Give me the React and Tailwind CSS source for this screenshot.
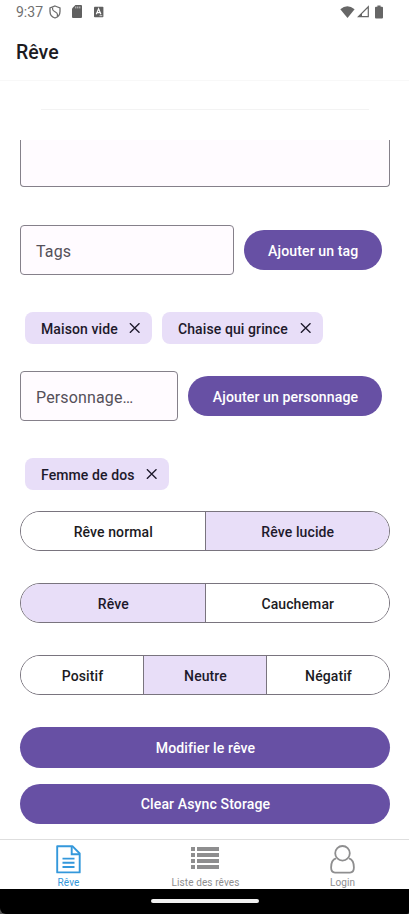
const purple =
  "flex items-center justify-center rounded-full bg-[#6750a4] text-[14.1px] font-medium tracking-[0.1px] text-white whitespace-nowrap";

function StatusBar() {
  return (
    <div className="flex h-6 items-center justify-between pl-4 pr-[26px] text-[#666]">
      <div className="flex items-center">
        <span className="w-[27px] text-[14px] leading-6 text-[#707070]">9:37</span>
        <svg className="ml-[6px]" width="12" height="14" viewBox="0 0 12 14" fill="none" stroke="#6c6c6c" strokeWidth="1.3">
          <path d="M6 1 L11 2.9 V6.5 C11 9.4 9 12 6 13 C3 12 1 9.4 1 6.5 V2.9 Z" />
          <path d="M3.6 2.4 V4.2 C3.6 6.6 8.4 6.8 8.4 9.2 V11" strokeWidth="1.2" />
        </svg>
        <svg className="-mt-px ml-[11px]" width="10" height="13" viewBox="0 0 10 13">
          <path d="M3.4 0 H9 Q10 0 10 1 V12 Q10 13 9 13 H1 Q0 13 0 12 V3.6 Z" fill="#606060" />
          <path d="M3.8 1.5V3.4M5.8 1.5V3.4M7.8 1.5V3.4" stroke="#ddd" strokeWidth="0.9" />
        </svg>
        <svg className="ml-[12px]" width="10" height="12" viewBox="0 0 10 12">
          <rect y="0.8" width="9.4" height="10.4" rx="0.8" fill="#606060" />
          <path d="M2.3 8.2 L4.6 2.8 L6.9 8.2 M3.1 6.6 H6.1" stroke="#fff" strokeWidth="1.2" fill="none" />
          <path d="M5.5 9.7H8.3" stroke="#ddd" strokeWidth="0.9" />
        </svg>
      </div>
      <div className="-mt-px flex items-center">
        <svg width="15" height="12" viewBox="0 0 15 12">
          <path d="M0.3 3.3 Q7.3 -3 14.6 3.3 L7.5 12 Z" fill="#666" />
        </svg>
        <svg className="ml-[2px]" width="13" height="13" viewBox="0 0 13 13">
          <path d="M11.3 1.8 V11.6 H1.5 Z" fill="none" stroke="#666" strokeWidth="1.2" />
          <path d="M5 8 V12 H1 Z" fill="#666" />
        </svg>
        <svg className="ml-[5px]" width="8" height="14" viewBox="0 0 8 14">
          <path d="M2.4 0.6 H5.6 V1.8 H7 Q8 1.8 8 2.8 V12.4 Q8 13.4 7 13.4 H1 Q0 13.4 0 12.4 V2.8 Q0 1.8 1 1.8 H2.4 Z" fill="#666" />
        </svg>
      </div>
    </div>
  );
}

function Chip({ label, width }) {
  return (
    <div className={"flex h-8 items-center justify-between rounded-lg bg-[#e8def8] pl-4 pr-3 text-[14px] font-medium tracking-[0.1px] text-[#1d192b] whitespace-nowrap " + width}>
      <span className="pt-[2px]">{label}</span>
      <svg width="11" height="10" viewBox="0 0 11 10" fill="none" stroke="#1d192b" strokeWidth="1.3">
        <path d="M0.9 0.2 L10.5 9.8 M10.5 0.2 L0.9 9.8" />
      </svg>
    </div>
  );
}

function Field({ label, className }) {
  return (
    <div className={"flex h-[50px] items-center rounded-[4px] border border-[#85808a] bg-[#fffbff] pl-[15px] pt-[3px] text-[16px] tracking-[0.15px] text-[#555059] " + className}>
      {label}
    </div>
  );
}

function Segments({ items, active, className }) {
  return (
    <div className={"flex h-10 shrink-0 divide-x divide-[#79747e] overflow-hidden rounded-full border border-[#79747e] text-[14px] font-medium tracking-[0.1px] " + className}>
      {items.map((t, i) => (
        <div key={t} className={"flex flex-1 items-center justify-center pl-px pt-[2px] " + (i === active ? "bg-[#e8def8] text-[#1d192b]" : "bg-white text-[#1c1b1f]")}>
          {t}
        </div>
      ))}
    </div>
  );
}

function Tab({ label, color, children }) {
  return (
    <div className={"flex flex-1 flex-col items-center " + color}>
      <div className="flex h-[36px] items-start justify-center pt-[5px]">{children}</div>
      <span className="text-[10px] leading-[13px] tracking-[0.1px]">{label}</span>
    </div>
  );
}

export default function App() {
  return (
    <div className="flex h-[914px] w-[409px] flex-col overflow-hidden bg-white font-['Roboto',sans-serif]">
      <StatusBar />
      <header className="flex h-[57px] shrink-0 items-center border-b border-[#f8f8f8] pl-4 pt-[2px] text-[19.5px] font-medium text-[#1c1b1f]">
        Rêve
      </header>

      <main className="flex h-[758px] shrink-0 flex-col pl-5 pr-[19px]">
        <div className="mx-[21px] mt-7 h-px shrink-0 bg-[#f3f3f3]" />
        <div className="mt-[30px] h-[47px] shrink-0 rounded-b-[4px] border border-t-0 border-[#85808a] bg-[#fffbff]" />

        <div className="mt-[38px] flex shrink-0 items-center pr-2">
          <Field label="Tags" className="w-[214px]" />
          <button className={purple + " ml-[9.5px] h-10 flex-1 pl-px pt-[3px]"}>Ajouter un tag</button>
        </div>
        <div className="mt-[37px] flex shrink-0 gap-[10px] pl-[5px]">
          <Chip label="Maison vide" width="w-[127px]" />
          <Chip label="Chaise qui grince" width="w-[160.5px]" />
        </div>

        <div className="mt-[27px] flex shrink-0 items-center pr-2">
          <Field label="Personnage…" className="w-[158px]" />
          <button className={purple + " ml-[10px] h-10 flex-1 pl-px pt-[3px]"}>Ajouter un personnage</button>
        </div>
        <div className="mt-[37px] flex shrink-0 pl-[5px]">
          <Chip label="Femme de dos" width="w-[144px]" />
        </div>

        <Segments items={["Rêve normal", "Rêve lucide"]} active={1} className="mt-[21px]" />
        <Segments items={["Rêve", "Cauchemar"]} active={0} className="mt-8" />
        <Segments items={["Positif", "Neutre", "Négatif"]} active={1} className="mt-8" />

        <button className={purple + " mt-[32px] h-[41px] shrink-0 pl-px pt-[2px]"}>Modifier le rêve</button>
        <button className={purple + " mt-[15.5px] h-10 shrink-0 pl-px pt-[2px]"}>Clear Async Storage</button>
      </main>

      <nav className="flex h-[50px] w-[411px] shrink-0 overflow-hidden border-t border-[#dedede] bg-white">
        <Tab label="Rêve" color="text-[#3498db]">
          <svg width="25" height="29" viewBox="0 0 25 29" fill="none" stroke="#3498db" strokeWidth="1.9">
            <path d="M1.2 1.2 H16.4 L23.7 8.5 V27.4 H1.2 Z" strokeLinejoin="round" />
            <path d="M15.7 1.2 V9.2 H23.7 M6.5 13.6 H18.5 M6.5 17.8 H18.5 M6.5 22 H18.5" />
          </svg>
        </Tab>
        <Tab label="Liste des rêves" color="text-[#8e8e8f]">
          <svg className="mr-[2px]" width="28" height="26" viewBox="0 0 28 26" fill="#8e8e8f">
            <path d="M0 2h4v4H0zM6 2h22v4H6zM0 8h4v4H0zM6 8h22v4H6zM0 14h4v4H0zM6 14h22v4H6zM0 20h4v4H0zM6 20h22v4H6z" />
          </svg>
        </Tab>
        <Tab label="Login" color="text-[#8e8e8f]">
          <svg width="25" height="29" viewBox="0 0 25 29" fill="none" stroke="#8e8e8f" strokeWidth="1.8">
            <circle cx="12.5" cy="8.3" r="7.3" />
            <path d="M6 13.4 C2.6 14.4 1.1 17.6 1.1 22.6 C1.1 26 2.4 27.6 5 27.6 H20 C22.6 27.6 23.9 26 23.9 22.6 C23.9 17.6 22.4 14.4 19 13.4" />
          </svg>
        </Tab>
      </nav>
      <div className="flex flex-1 bg-[#555]">
        <div className="flex flex-1 items-start justify-center rounded-bl-[6px] rounded-br-[2px] bg-black pt-[10px]">
          <div className="h-1 w-[108px] rounded-full bg-[#f2f2f2]" />
        </div>
      </div>
    </div>
  );
}
